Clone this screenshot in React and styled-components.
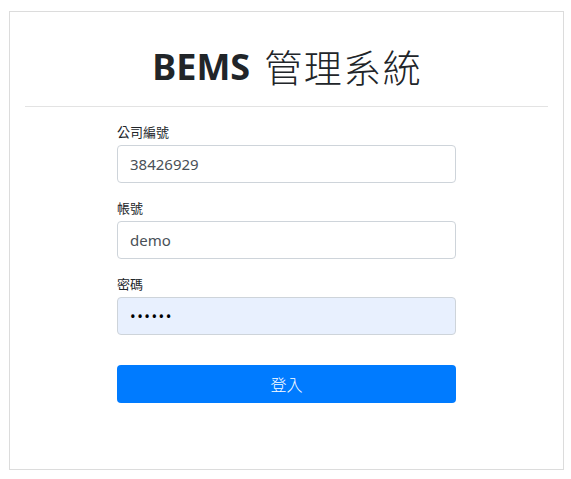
import React from "react";
import styled, { createGlobalStyle } from "styled-components";

const GlobalStyle = createGlobalStyle`
  body {
    margin: 0;
    background: #fff;
    font-family: "Noto Sans", "Noto Sans CJK TC", sans-serif;
    color: #212529;
  }
`;

const Page = styled.div`
  padding: 11px 8px 10px 9px;
`;

const Card = styled.div`
  box-sizing: border-box;
  width: 555px;
  height: 459px;
  border: 1px solid #dcdcdc;
  padding: 0 15px;
`;

const Title = styled.h1`
  margin: 0;
  height: 94px;
  box-sizing: border-box;
  padding-top: 15px;
  display: flex;
  align-items: center;
  justify-content: center;
  gap: 14px;
  font-size: 36px;
  font-weight: 400;
  line-height: 1;
  color: #212529;
  b {
    font-weight: 700;
  }
  span {
    font-weight: 300;
    font-size: 38px;
    letter-spacing: 1.5px;
    margin-right: -1.5px;
  }
`;

const Divider = styled.hr`
  margin: 0;
  border: 0;
  border-top: 1px solid #e3e3e3;
`;

const Form = styled.form`
  width: 339px;
  margin: 0 auto;
  padding-top: 16px;
`;

const Group = styled.div`
  margin-bottom: 16px;
`;

const Label = styled.label`
  display: block;
  font-size: 13px;
  line-height: 18px;
  margin-bottom: 4px;
  color: #212529;
`;

const Input = styled.input`
  box-sizing: border-box;
  display: block;
  width: 100%;
  height: 38px;
  padding: 6px 12px;
  font-family: "Noto Sans", "Noto Sans CJK TC", sans-serif;
  font-size: 15px;
  color: ${(p) => (p.type === "password" ? "#000" : "#495057")};
  background: ${(p) => (p.filled ? "#e8f0fe" : "#fff")};
  border: 1px solid #ced4da;
  border-radius: 4px;
  outline: none;
  letter-spacing: ${(p) => (p.type === "password" ? "1.5px" : "0")};
`;

const Button = styled.button`
  display: block;
  width: 100%;
  height: 38px;
  margin-top: 30px;
  border: 0;
  border-radius: 4px;
  background: #007bff;
  color: #fff;
  font-family: "Noto Sans", "Noto Sans CJK TC", sans-serif;
  font-size: 16px;
  font-weight: 300;
  cursor: pointer;
`;

const Last = styled(Group)`
  margin-bottom: 0;
`;

export default function App() {
  return (
    <>
      <GlobalStyle />
      <Page>
        <Card>
          <Title>
            <b>BEMS</b>
            <span>管理系統</span>
          </Title>
          <Divider />
          <Form onSubmit={(e) => e.preventDefault()}>
            <Group>
              <Label>公司編號</Label>
              <Input defaultValue="38426929" />
            </Group>
            <Group>
              <Label>帳號</Label>
              <Input defaultValue="demo" />
            </Group>
            <Last>
              <Label>密碼</Label>
              <Input type="password" defaultValue="123456" filled />
            </Last>
            <Button type="submit">登入</Button>
          </Form>
        </Card>
      </Page>
    </>
  );
}
